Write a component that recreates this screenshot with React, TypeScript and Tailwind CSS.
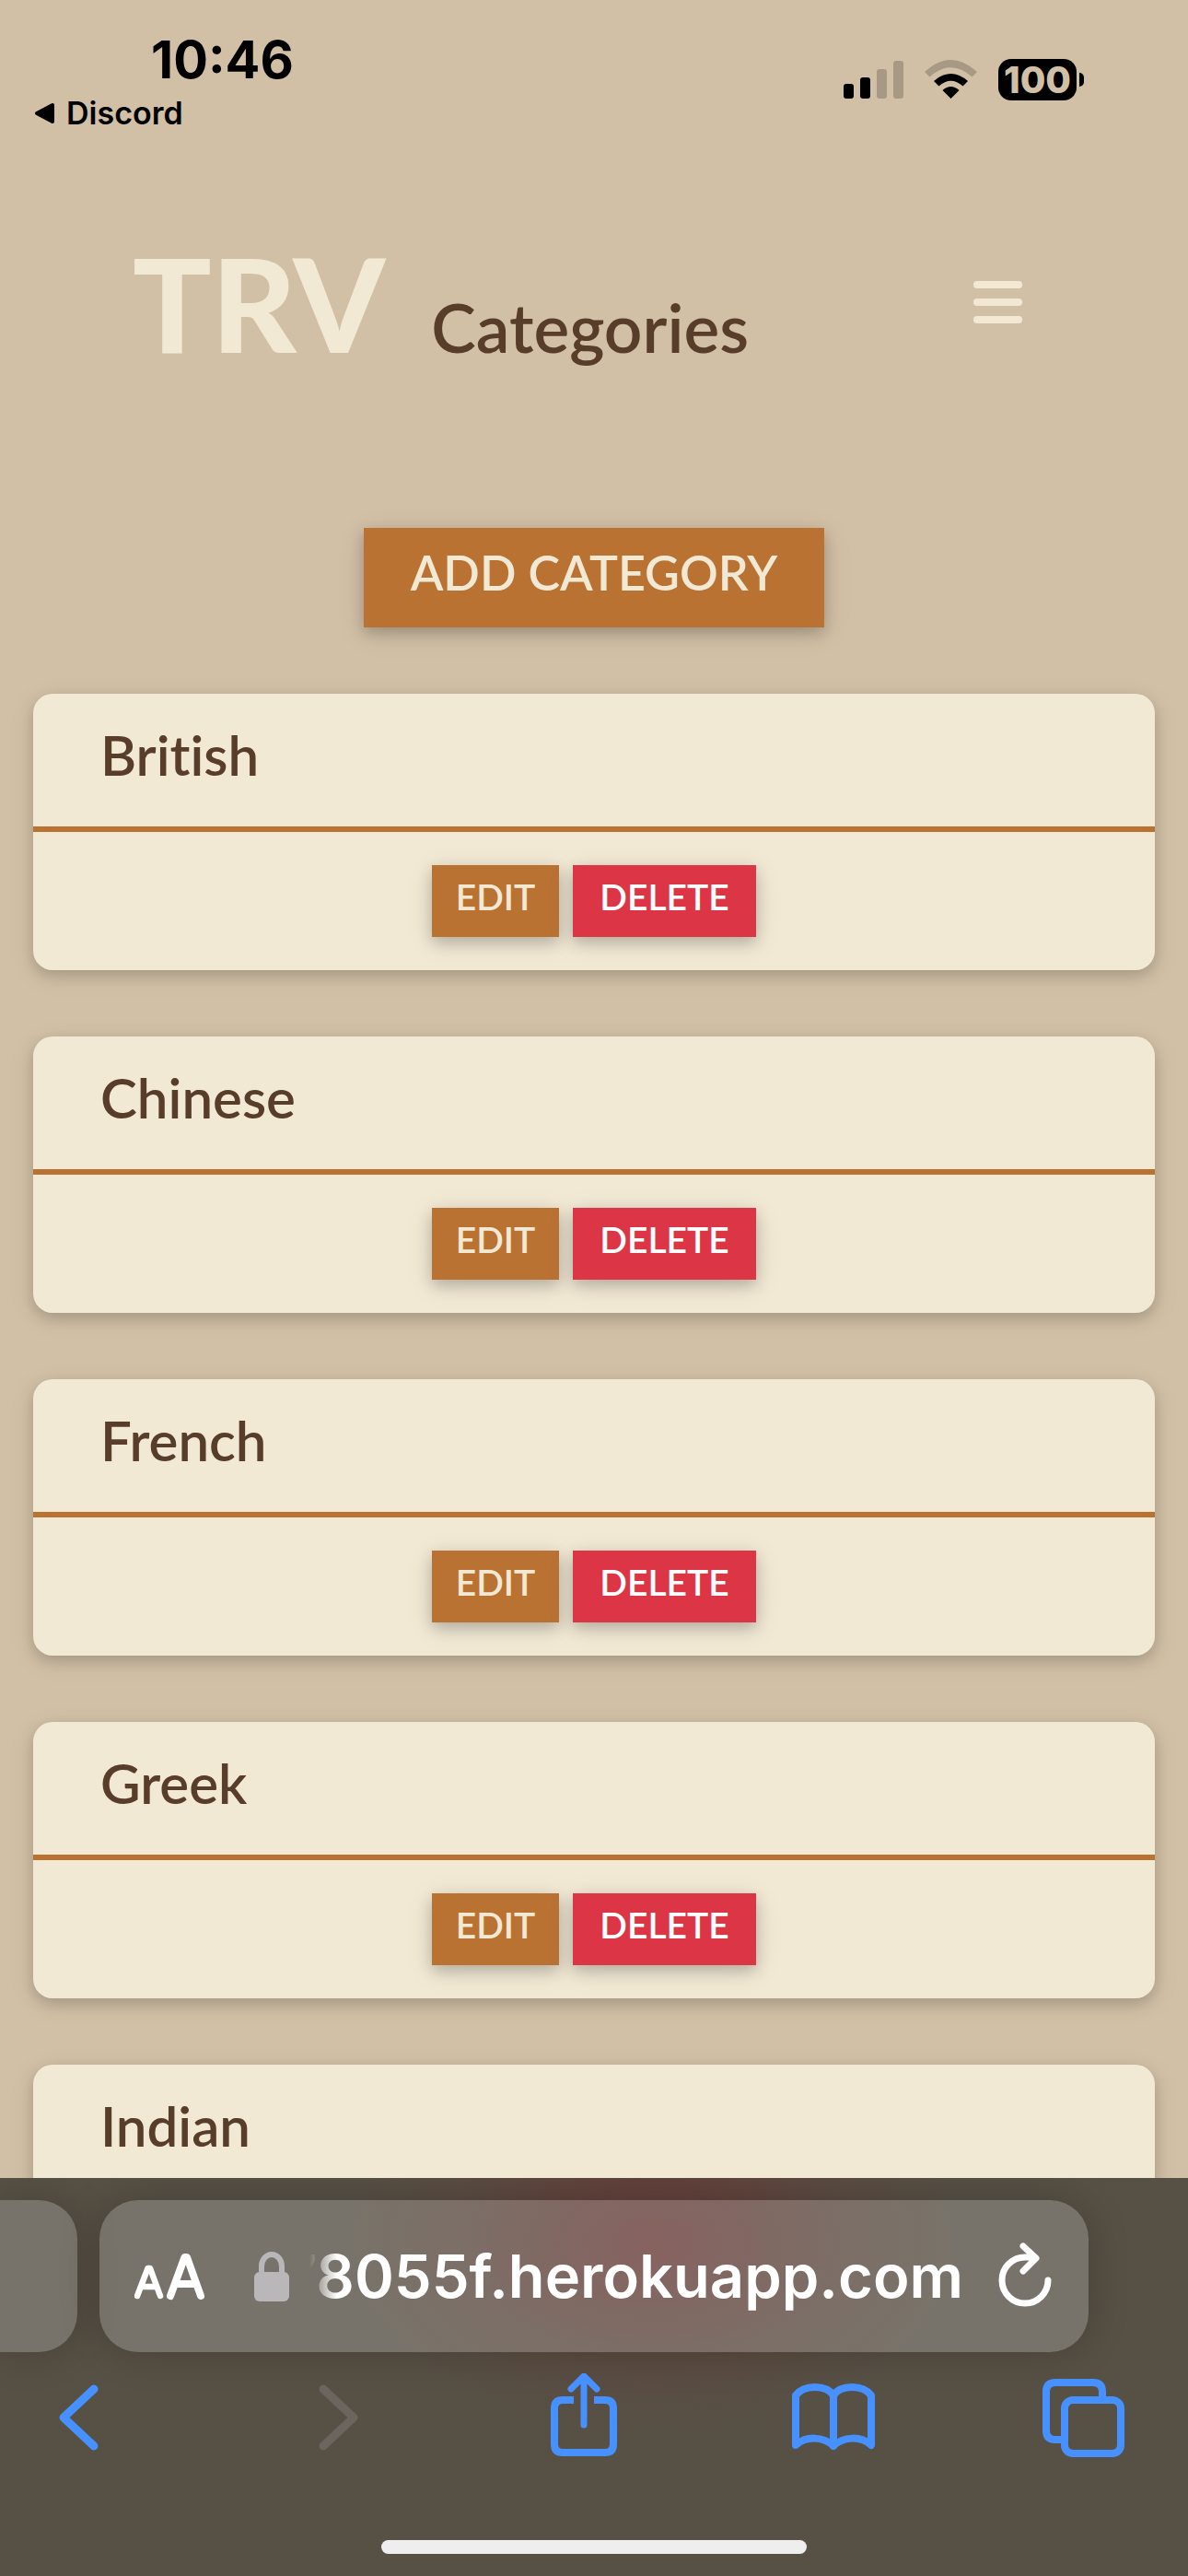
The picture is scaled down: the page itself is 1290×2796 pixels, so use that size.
import type { ReactNode } from 'react';

const categories = ['British', 'Chinese', 'French', 'Greek', 'Indian'];

function StatusBar() {
  return (
    <div className="flex items-start justify-between pt-[34px] pr-[113px] pl-9 font-['Inter',sans-serif] text-black">
      <div className="flex flex-col">
        <span className="pl-[128px] text-[56px] leading-[62px] font-bold">10:46</span>
        <a href="#discord" className="flex items-center gap-[12px] text-[34px] leading-[54px] font-semibold">
          <svg width="24" height="24" viewBox="0 0 24 24" aria-hidden="true">
            <path d="M4 12 21 3V21Z" fill="#000" stroke="#000" strokeWidth="4" strokeLinejoin="round" />
          </svg>
          Discord
        </a>
      </div>
      <div className="flex items-center gap-[23px] pt-[30px]">
        <svg width="65" height="45" viewBox="0 0 65 45" aria-label="Signal">
          <rect x="0" y="27" width="11" height="16" rx="3" />
          <rect x="18" y="20" width="11" height="23" rx="3" />
          <rect x="36" y="11" width="11" height="32" rx="3" opacity="0.2" />
          <rect x="54" y="2" width="11" height="41" rx="3" opacity="0.2" />
        </svg>
        <svg width="57" height="45" viewBox="0 0 57 45" aria-label="Wi-Fi">
          <path d="M0 14Q28.500 -12 57 14L51.500 19.500Q28.500 -1 5.500 19.500Z" opacity="0.2" />
          <path d="M10 24Q28.500 8 47 24L41.500 29.500Q28.500 18 15.500 29.500Z" />
          <path d="M19.500 34Q28.500 26 37.500 34L28.500 43Z" />
        </svg>
        <div className="flex items-center gap-[3px]">
          <span className="flex h-[45px] w-[85px] items-center justify-center rounded-[14px] bg-black text-[40px] leading-[45px] font-extrabold text-[#d2c0a6]">
            100
          </span>
          <span className="h-[15px] w-[5px] rounded-r-full bg-black" />
        </div>
      </div>
    </div>
  );
}

function CategoryCard({ name }: { name: string }) {
  return (
    <article className="shrink-0 rounded-[21px] bg-[#f2e9d5] shadow-[0_6px_15px_rgba(0,0,0,0.16),0_6px_30px_rgba(0,0,0,0.08)]">
      <h2 className="border-b-6 border-[#b97231] px-[73px] pt-[30px] pb-[42px] text-[60px] leading-[72px] font-semibold [font-variant-ligatures:none]">
        {name}
      </h2>
      <div className="flex justify-center gap-[15px] p-9 text-[39px] leading-[48px] font-semibold">
        <button
          type="button"
          className="min-w-[138px] bg-[#b97231] px-5 pt-[10px] pb-[20px] text-[#f2e9d5] shadow-[0_6px_15px_rgba(0,0,0,0.2),0_6px_30px_rgba(0,0,0,0.1)]"
        >
          EDIT
        </button>
        <button
          type="button"
          className="min-w-[199px] bg-[#dc3545] px-5 pt-[10px] pb-[20px] text-white shadow-[0_6px_15px_rgba(0,0,0,0.2),0_6px_30px_rgba(0,0,0,0.1)]"
        >
          DELETE
        </button>
      </div>
    </article>
  );
}

function ToolButton({ label, disabled, children }: { label: string; disabled?: boolean; children: ReactNode }) {
  return (
    <button type="button" aria-label={label} disabled={disabled} className="text-[#4691ff] disabled:text-[#6a655f]">
      <svg
        width="96"
        height="96"
        viewBox="0 0 96 96"
        fill="none"
        stroke="currentColor"
        strokeWidth="8"
        strokeLinecap="round"
        strokeLinejoin="round"
      >
        {children}
      </svg>
    </button>
  );
}

function BrowserBar() {
  return (
    <footer className="shrink-0 overflow-hidden bg-[#575045] bg-[radial-gradient(ellipse_330px_200px_at_55%_70px,#6a3c38_0%,#653e39cc_30%,#5f473e80_65%,transparent_100%)] pt-6 font-['Inter',sans-serif]">
      <div className="flex gap-6 pr-[108px]">
        <div className="h-[165px] w-[84px] shrink-0 rounded-r-[42px] bg-white/20 shadow-[0_0_45px_rgba(0,0,0,0.2)]" />
        <div className="flex h-[165px] min-w-0 flex-1 items-center rounded-[42px] bg-white/20 pr-[38px] pl-[38px] text-white shadow-[0_0_45px_rgba(0,0,0,0.2)]">
          <button type="button" aria-label="Page settings" className="shrink-0">
            <svg width="76" height="52" viewBox="0 0 76 52" fill="none" stroke="#fff" strokeLinecap="round" strokeLinejoin="round">
              <path d="M3 47 14.500 17H17L28 47M7.500 37H23.500" strokeWidth="6.500" />
              <path d="M39 47 54.500 5H57L72 47M45 34H66" strokeWidth="8" />
            </svg>
          </button>
          <svg className="ml-[54px] shrink-0" width="38" height="54" viewBox="0 0 38 54" aria-hidden="true">
            <rect x="0" y="22" width="38" height="32" rx="6" fill="#bab7bb" />
            <path d="M8 24V16a11 13 0 0 1 22 0V24" fill="none" stroke="#bab7bb" strokeWidth="6" />
          </svg>
          <input
            type="text"
            aria-label="Address"
            defaultValue="78055f.herokuapp.com"
            className="-ml-[20px] min-w-0 flex-1 bg-transparent [mask-image:linear-gradient(to_right,transparent_42px,black_72px)] text-right text-[65px] leading-[84px] font-semibold outline-none"
          />
          <button type="button" aria-label="Reload" className="ml-9 shrink-0">
            <svg width="62" height="76" viewBox="0 0 62 76" fill="none" stroke="#fff" strokeWidth="7" strokeLinecap="round" strokeLinejoin="round">
              <path d="M56 42A25 25 0 1 1 31 17H41M29 5 43 18 29 32" />
            </svg>
          </button>
        </div>
      </div>
      <div className="flex justify-between pt-[23px] pr-[67px] pl-[38px]">
        <ToolButton label="Back">
          <path d="M64 17 31 48 64 79" strokeWidth="9" />
        </ToolButton>
        <ToolButton label="Forward" disabled>
          <path d="M41 17 74 48 41 79" strokeWidth="9" />
        </ToolButton>
        <ToolButton label="Share">
          <path d="M40 29H28Q19 29 19 38V77Q19 86 28 86H74Q83 86 83 77V38Q83 29 74 29H62" strokeLinecap="butt" />
          <path d="M51 56V4M37 17 51 3 65 17" strokeWidth="7" />
        </ToolButton>
        <ToolButton label="Bookmarks">
          <path d="M50 79V24C42 12 18 12 9 24V78C20 68 39 68 50 79C61 68 80 68 91 78V24C82 12 58 12 50 24" />
        </ToolButton>
        <ToolButton label="Tabs">
          <path d="M25 72H19Q9 72 9 62V20Q9 10 19 10H60Q70 10 70 20V29" strokeLinecap="butt" />
          <rect x="29" y="29" width="61" height="58" rx="9" />
        </ToolButton>
      </div>
      <div className="flex justify-center pt-[85px] pb-6">
        <span className="h-[15px] w-[462px] rounded-full bg-[#eeeeee]" />
      </div>
    </footer>
  );
}

export default function App() {
  return (
    <div className="flex h-screen flex-col bg-[#d2c0a6] font-['Lato',sans-serif] text-[#583d2a]">
      <main className="min-h-0 flex-1 overflow-hidden">
        <StatusBar />
        <header className="flex items-center justify-between pt-[106px] pr-[180px] pl-[144px]">
          <div className="flex items-baseline gap-[50px]">
            <a href="#home" className="text-[142px] leading-[144px] font-black text-[#f2e9d5]">
              TRV
            </a>
            <h1 className="text-[73px] leading-[84px] font-semibold">Categories</h1>
          </div>
          <button type="button" aria-label="Menu" className="flex flex-col gap-[11px]">
            <span className="h-2 w-[53px] rounded-full bg-[#f2e9d5]" />
            <span className="h-2 w-[53px] rounded-full bg-[#f2e9d5]" />
            <span className="h-2 w-[53px] rounded-full bg-[#f2e9d5]" />
          </button>
        </header>
        <div className="flex justify-center pt-[173px]">
          <button
            type="button"
            className="min-w-[500px] bg-[#b97231] px-[44px] pt-[17px] pb-[29px] text-[52px] leading-[62px] font-semibold text-[#f2e9d5] shadow-[0_6px_15px_rgba(0,0,0,0.2),0_6px_30px_rgba(0,0,0,0.1)]"
          >
            ADD CATEGORY
          </button>
        </div>
        <section className="flex flex-col gap-[72px] px-9 pt-[72px]">
          {categories.map((name) => (
            <CategoryCard key={name} name={name} />
          ))}
        </section>
      </main>
      <BrowserBar />
    </div>
  );
}
